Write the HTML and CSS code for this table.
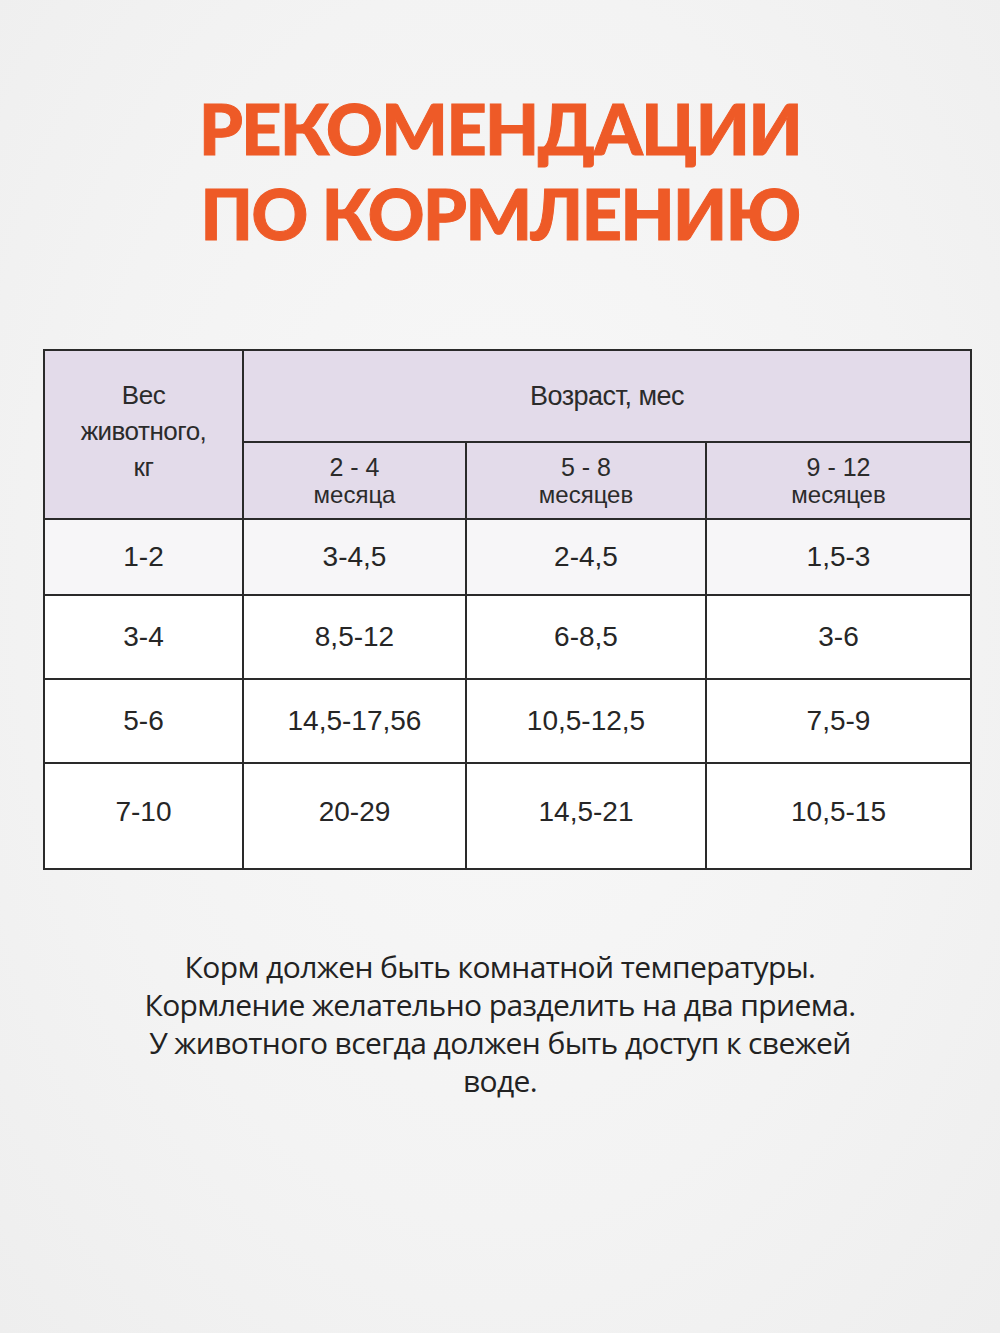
FILE: index.html
```html
<!DOCTYPE html>
<html lang="ru">
<head>
<meta charset="utf-8">
<title>Рекомендации по кормлению</title>
<link rel="stylesheet" href="styles.css">
</head>
<body>
<main class="page">
  <h1 class="title">РЕКОМЕНДАЦИИ<br>ПО КОРМЛЕНИЮ</h1>
  <table class="feed">
    <colgroup>
      <col class="c1"><col class="c2"><col class="c3"><col class="c4">
    </colgroup>
    <thead>
      <tr class="h1">
        <th rowspan="2" class="weight">Вес<br>животного,<br>кг</th>
        <th colspan="3" class="age">Возраст, мес</th>
      </tr>
      <tr class="h2">
        <th><span class="rng">2 - 4</span><span class="unit">месяца</span></th>
        <th><span class="rng">5 - 8</span><span class="unit">месяцев</span></th>
        <th><span class="rng">9 - 12</span><span class="unit">месяцев</span></th>
      </tr>
    </thead>
    <tbody>
      <tr class="r1 shade"><td>1-2</td><td>3-4,5</td><td>2-4,5</td><td>1,5-3</td></tr>
      <tr class="r2"><td>3-4</td><td>8,5-12</td><td>6-8,5</td><td>3-6</td></tr>
      <tr class="r3"><td>5-6</td><td>14,5-17,56</td><td>10,5-12,5</td><td>7,5-9</td></tr>
      <tr class="r4"><td>7-10</td><td>20-29</td><td>14,5-21</td><td>10,5-15</td></tr>
    </tbody>
  </table>
  <p class="note">Корм должен быть комнатной температуры.<br>Кормление желательно разделить на два приема.<br>У животного всегда должен быть доступ к свежей<br>воде.</p>
</main>
</body>
</html>
```

FILE: styles.css
```css
html, body {
  margin: 0;
  padding: 0;
}
body {
  width: 1000px;
  height: 1333px;
  background: radial-gradient(ellipse at 50% 45%, #f8f8f8 0%, #f3f3f3 60%, #eeeeee 100%);
  font-family: "Liberation Sans", Arial, sans-serif;
  color: #222;
  overflow: hidden;
}
.page {
  display: flex;
  flex-direction: column;
  align-items: center;
  padding-top: 86px;
}
.title {
  margin: 0;
  font-family: Lato, "Open Sans", sans-serif;
  font-weight: 900;
  font-size: 70px;
  line-height: 85px;
  color: #ee5a27;
  text-align: center;
  letter-spacing: -1.5px;
  -webkit-text-stroke: 1px #ee5a27;
}
.feed {
  margin-top: 93px;
  margin-left: 15px;
  border-collapse: collapse;
  width: 927px;
  table-layout: fixed;
  border: 2px solid #2a2a2a;
}
.c1 { width: 199px; }
.c2 { width: 223px; }
.c3 { width: 240px; }
.c4 { width: 265px; }
.feed th, .feed td {
  border: 2px solid #2a2a2a;
  text-align: center;
  padding: 0;
}
.feed th {
  background: #e3dbea;
  font-weight: normal;
  color: #2b2b2b;
}
.weight {
  font-size: 26px;
  line-height: 36px;
  vertical-align: top;
  padding-top: 26px !important;
  letter-spacing: -0.5px;
}
.age {
  font-size: 27px;
  height: 90px;
  vertical-align: middle;
  letter-spacing: -0.5px;
}
.h2 th {
  height: 75px;
  vertical-align: middle;
}
.rng {
  display: block;
  font-size: 25px;
  line-height: 27px;
}
.unit {
  display: block;
  font-size: 24px;
  line-height: 27px;
}
.feed td {
  font-size: 28px;
  background: #ffffff;
  color: #262626;
  vertical-align: middle;
}
.feed tr.shade td { background: #f7f6f8; }
.r1 td { height: 74px; }
.r2 td { height: 82px; }
.r3 td { height: 82px; }
.r4 td { height: 96px; padding-bottom: 8px; }
.note {
  margin: 78px 0 0;
  font-family: "Open Sans", sans-serif;
  font-size: 30px;
  line-height: 38px;
  text-align: center;
  color: #222;
  letter-spacing: -0.6px;
}
```
